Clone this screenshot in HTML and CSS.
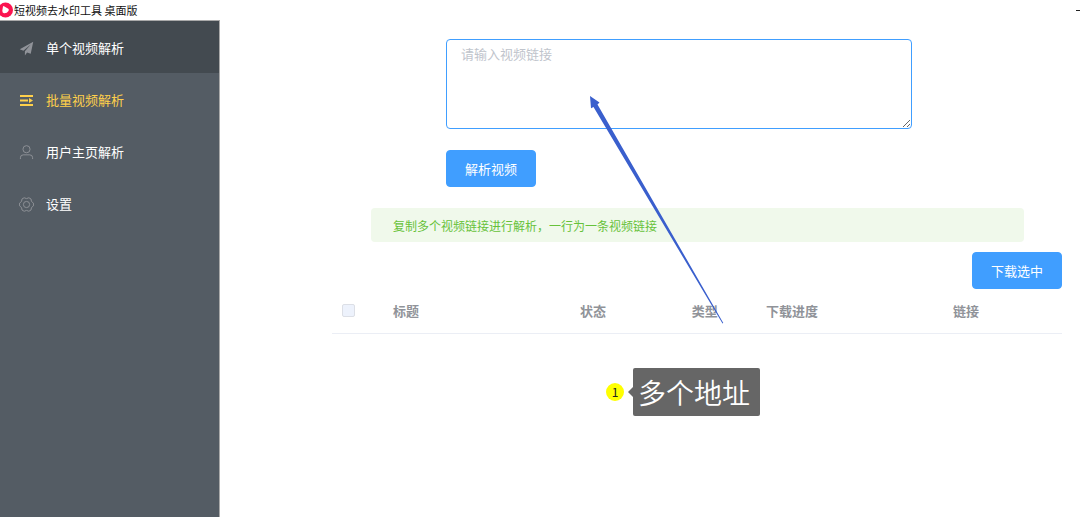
FILE: index.html
```
<!DOCTYPE html>
<html lang="zh-CN">
<head>
    <meta charset="UTF-8">
    <meta name="viewport" content="width=device-width, initial-scale=1.0">
    <title>短视频去水印工具 桌面版</title>
    <link rel="stylesheet" href="styles.css">
</head>
<body>

<header class="titlebar">
    <svg class="logo" viewBox="0 0 14 16">
        <path d="M-2 8a7.5 7.5 0 1 1 15 0a7.5 7.5 0 0 1-15 0z" fill="#fb1450"/>
        <path d="M3 4.500Q3.200 3.800 4 4.200L8.300 6.700Q9.300 7.700 8.500 9Q7 11.500 4 11.300Q2.200 11 2.300 8.500z" fill="#fff"/>
    </svg>
    <span class="app-name">短视频去水印工具 桌面版</span>
    <button class="minimize" aria-label="最小化"></button>
</header>

<div class="container">
    <!-- 左侧菜单 -->
    <nav class="menu">
        <a class="menu-item hover" href="#">
            <svg class="icon" viewBox="0 0 16 16" fill="#909399">
                <path d="M15.200.8L.8 8.800L4.700 10.400L12.500 3.800L6.300 11V15.400L8.600 12.200L12.500 13.700z"/>
            </svg>
            <span>单个视频解析</span>
        </a>
        <a class="menu-item active" href="#">
            <svg class="icon" viewBox="0 0 15 15" fill="#ffd04b">
                <path d="M1 2h13v2H1zM1 6.500h8v2H1zM1 11h13v2H1zM10 5L14 7.500L10 10z"/>
            </svg>
            <span>批量视频解析</span>
        </a>
        <a class="menu-item" href="#">
            <svg class="icon" viewBox="0 0 16 16" fill="none" stroke="#909399">
                <circle cx="8" cy="4.500" r="3.800"/>
                <path d="M1.500 15v-1.500a3 3 0 0 1 3-3h7a3 3 0 0 1 3 3V15"/>
            </svg>
            <span>用户主页解析</span>
        </a>
        <a class="menu-item" href="#">
            <svg class="icon" viewBox="0 0 16 16" fill="none" stroke="#909399">
                <path d="M5.500.8Q8 2.600 10.500.8L12.800 2.100Q12.500 5.200 15.400 6.500V9.500Q12.500 10.800 12.800 13.900L10.500 15.200Q8 13.400 5.500 15.200L3.200 13.900Q3.500 10.800.6 9.500V6.500Q3.500 5.200 3.200 2.100z"/>
                <circle cx="8" cy="8" r="3.300"/>
            </svg>
            <span>设置</span>
        </a>
    </nav>

    <!-- 右侧内容 -->
    <main class="content">
        <form class="link-form">
            <textarea class="textarea" placeholder="请输入视频链接" aria-label="视频链接"></textarea>
            <button type="button" class="button">解析视频</button>
        </form>

        <div class="alert">复制多个视频链接进行解析，一行为一条视频链接</div>

        <div class="toolbar">
            <button type="button" class="button">下载选中</button>
        </div>

        <table class="table">
            <colgroup>
                <col class="col-check">
                <col class="col-title">
                <col class="col-status">
                <col class="col-type">
                <col class="col-progress">
                <col class="col-link">
            </colgroup>
            <thead>
                <tr>
                    <th><input type="checkbox" class="checkbox" aria-label="全选" disabled></th>
                    <th>标题</th>
                    <th>状态</th>
                    <th>类型</th>
                    <th>下载进度</th>
                    <th>链接</th>
                </tr>
            </thead>
        </table>

        <!-- 标注 -->
        <svg class="arrow" viewBox="0 0 136 230">
            <path d="M1 1L10.500 7.500L8.500 9.500L134.300 228L133.500 228.500L4.500 12L2 13.300z" fill="#3a5fcd"/>
        </svg>
        <div class="note">
            <span class="note-number">1</span>
            <span class="note-text">多个地址</span>
        </div>
    </main>
</div>

</body>
</html>
```

FILE: styles.css
```
* {
    box-sizing: border-box;
}

body {
    margin: 0;
    min-height: 100vh;
    display: flex;
    flex-direction: column;
    overflow-x: hidden;
    font-family: "Noto Sans CJK SC", sans-serif;
    font-size: 13px;
    background-color: #fff;
}

button {
    font-family: inherit;
}

/* 标题栏 */
.titlebar {
    display: flex;
    align-items: center;
    height: 20px;
}

.logo {
    width: 14px;
    height: 16px;
}

.app-name {
    font-size: 11px;
    line-height: 20px;
    color: #111;
}

.minimize {
    width: 4px;
    height: 1px;
    margin-left: auto;
    padding: 0;
    border: none;
    background-color: #222;
}

.container {
    display: flex;
    flex: 1;
}

/* 菜单 */
.menu {
    flex: none;
    width: 220px;
    background-color: #545c64;
    border-top: 1px solid #aaa;
    border-right: 1px solid #aaa;
}

.menu-item {
    display: flex;
    align-items: center;
    gap: 12px;
    height: 52px;
    padding: 2px 19px 0;
    line-height: 20px;
    color: #fff;
    text-decoration: none;
}

.menu-item.hover {
    background-color: #434a50;
}

.menu-item.active {
    color: #ffd04b;
}

.icon {
    width: 15px;
    height: 15px;
}

/* 内容 */
.content {
    position: relative;
    flex: 1;
    padding: 19px 18px 0 112px;
}

.link-form {
    display: flex;
    flex-direction: column;
    align-items: flex-start;
    gap: 21px;
    padding: 0 150px 0 114px;
}

.textarea {
    display: block;
    width: 100%;
    height: 90px;
    padding: 5px 14px;
    border: 1px solid #409eff;
    border-radius: 4px;
    outline: none;
    resize: vertical;
    font-family: "Liberation Serif", "Noto Sans CJK SC", serif;
    font-size: 13px;
    line-height: 20px;
    color: #606266;
}

.textarea::placeholder {
    color: #c0c4cc;
}

.button {
    height: 37px;
    padding: 0 18px;
    border: 1px solid #409eff;
    border-radius: 4px;
    background-color: #409eff;
    color: #fff;
    font-size: 13px;
    cursor: pointer;
}

.button:hover {
    background-color: #66b1ff;
}

.alert {
    margin: 21px 38px 10px 39px;
    padding: 9px 22px 7px;
    border-radius: 4px;
    background-color: #f0f9eb;
    color: #67c23a;
    font-size: 12px;
    line-height: 18px;
}

.toolbar {
    display: flex;
    justify-content: flex-end;
}

.table {
    width: 100%;
    table-layout: fixed;
    border-collapse: collapse;
}

.table th {
    height: 44px;
    padding: 0 10px;
    border-bottom: 1px solid #ebeef5;
    color: #909399;
    font-weight: bold;
    line-height: 20px;
    text-align: left;
}

.col-check { width: 7%; }
.col-title { width: 25.6%; }
.col-status { width: 15.3%; }
.col-type { width: 10.2%; }
.col-progress { width: 25.6%; }

.checkbox {
    appearance: none;
    display: block;
    width: 13px;
    height: 13px;
    margin: 0;
    border: 1px solid #dcdfe6;
    border-radius: 2px;
    background-color: #edf2fc;
}

/* 标注浮在内容上面 */
.arrow {
    position: absolute;
    left: 369px;
    top: 75px;
    width: 136px;
    height: 230px;
    pointer-events: none;
}

.note {
    position: absolute;
    left: 386px;
    top: 348px;
    display: flex;
    align-items: center;
    gap: 9px;
}

.note-number {
    width: 18px;
    height: 18px;
    border-radius: 50%;
    background-color: #ff0;
    color: #222;
    font-size: 12px;
    line-height: 18px;
    text-align: center;
}

.note-text {
    position: relative;
    padding: 4px 10px 4px 5px;
    border-radius: 2px;
    background-color: #666;
    color: #fff;
    font-size: 28px;
    font-weight: 350;
    line-height: 40px;
}

.note-text::before {
    content: "";
    position: absolute;
    left: -5px;
    top: 19px;
    border: 5px solid transparent;
    border-left: none;
    border-right-color: #666;
}
```
